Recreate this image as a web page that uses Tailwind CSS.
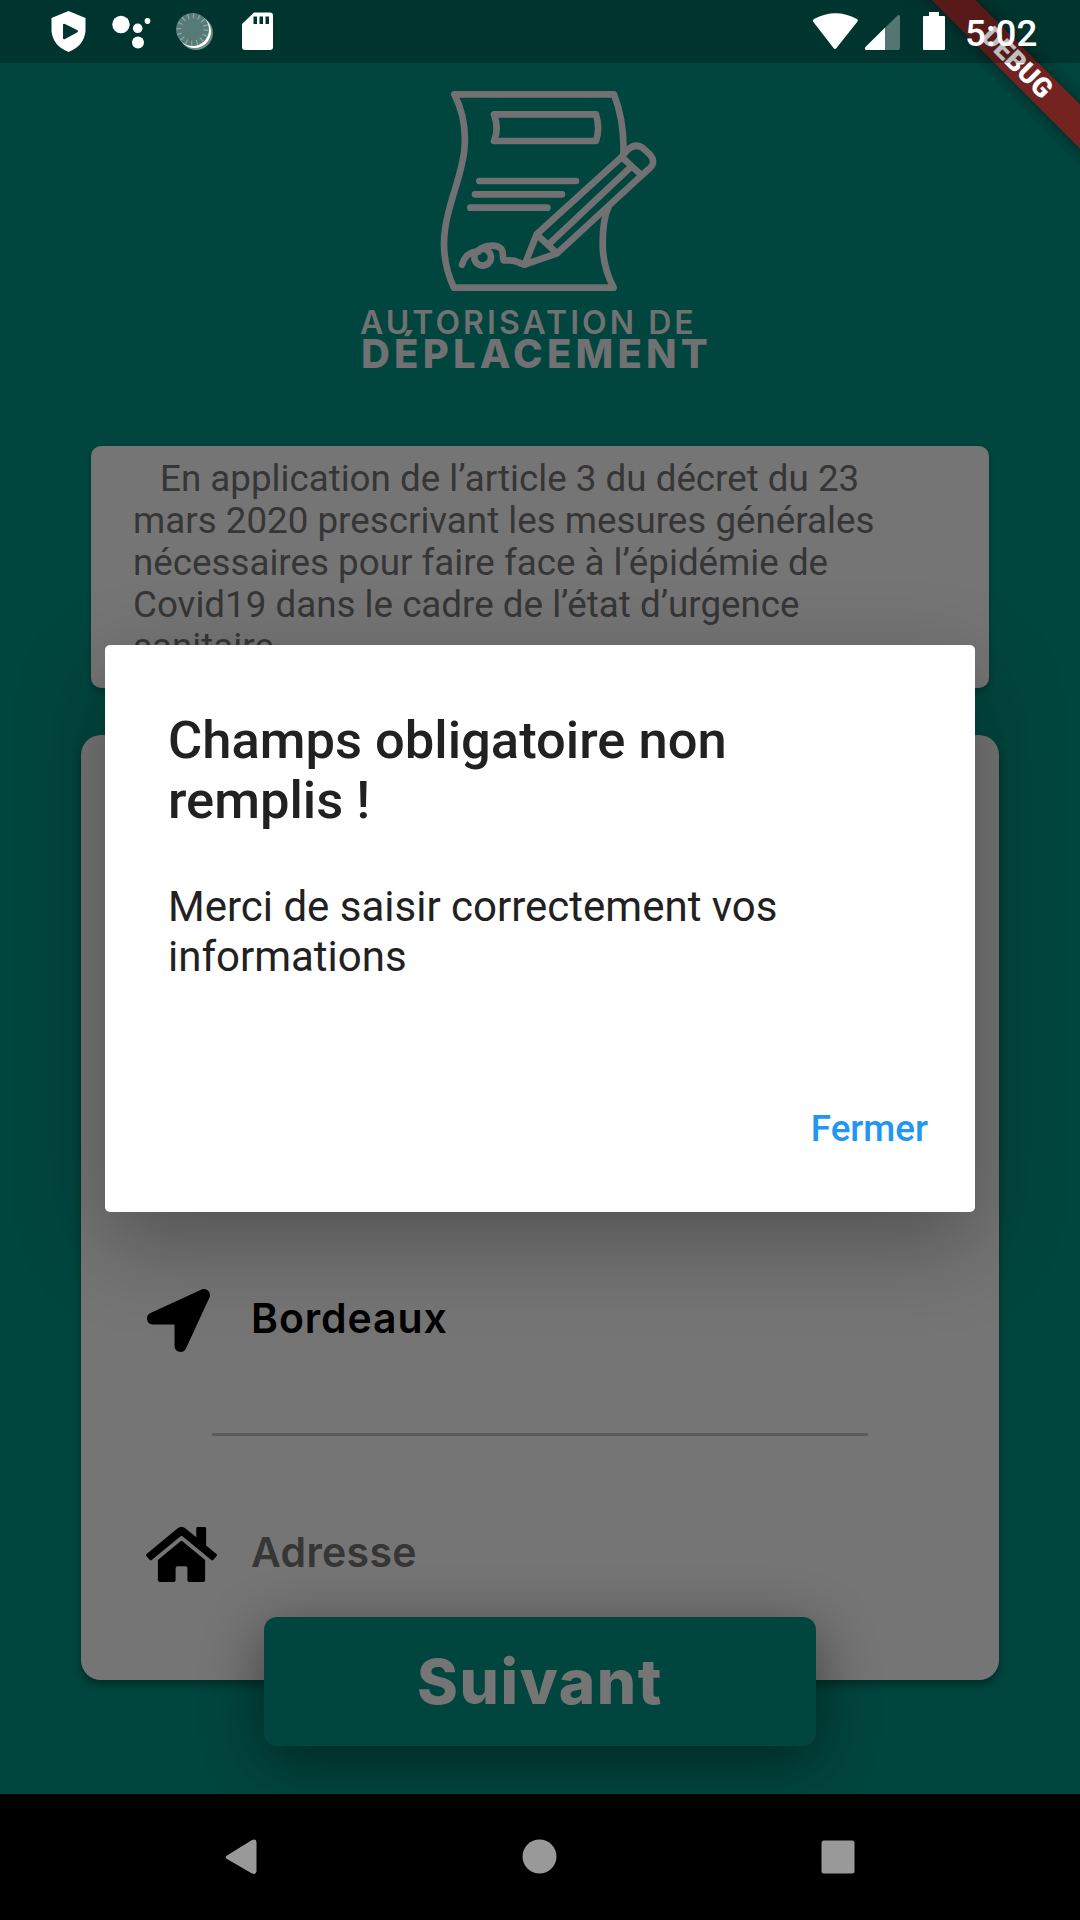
<!DOCTYPE html>
<html lang="fr">
<head>
<meta charset="utf-8">
<title>Autorisation de déplacement</title>
<script src="https://cdn.jsdelivr.net/npm/@tailwindcss/browser@4"></script>
</head>
<body class="bg-black">
<div class="relative flex h-[1920px] w-[1080px] flex-col overflow-hidden bg-[#00463e] font-[Roboto,sans-serif]">

  <!-- App content -->
  <main class="flex h-[1794px] flex-col items-center">
    <header class="flex h-[446px] w-full flex-col items-start pt-[85px] pl-[360px] font-[Inter,sans-serif] text-[#717073]">
      <svg class="ml-[75px] h-[212px] w-[230px] shrink-0" viewBox="285 45 690 636" fill="none" stroke="#717073" stroke-width="20" stroke-linecap="round" stroke-linejoin="round">
        <path d="M850 250C853 180 840 120 822 73H343C372 130 378 190 373 240C364 330 313 420 312 520C312 570 322 612 342 653H821C798 610 788 570 788 520C788 480 792 440 806 410"/>
        <path d="M462 133H768C776 160 776 190 768 213H462C472 190 472 160 462 133Z"/>
        <path d="M418 333H708M405 373H666M391 413H622"/>
        <path d="M366 584C372 560 390 545 415 545M418 540C430 525 470 522 484 537C492 548 486 560 491 571C505 573 518 567 535 577C545 582 550 584 554 584"/>
        <circle cx="428" cy="562" r="25"/>
        <path d="M554 584L590 493L845 261M554 584L651 550L905 316M590 493L651 550M625 524L868 295M845 261L905 316"/>
        <path d="M845 261L862 240Q889 216 913 238L928 252Q950 275 929 295L905 316"/>
      </svg>
      <div class="mt-[2px] text-[32px] leading-[48px] font-semibold tracking-[3.05px] whitespace-nowrap">AUTORISATION DE</div>
      <div class="-mt-[17px] ml-px text-[40px] leading-[48px] font-extrabold tracking-[4.2px] whitespace-nowrap">DÉPLACEMENT</div>
    </header>

    <section class="h-[242px] w-[898px] shrink-0 rounded-[10px] bg-[#757575] px-[42px] pt-[12px] text-[36.75px] leading-[42px] text-[#363636] shadow-[0_4px_6px_rgba(0,0,0,0.25)]">
      <p class="indent-[27px] whitespace-nowrap">En application de l’article 3 du décret du 23<br>mars 2020 prescrivant les mesures générales<br>nécessaires pour faire face à l’épidémie de<br>Covid19 dans le cadre de l’état d’urgence<br>sanitaire</p>
    </section>

    <section class="mt-[47px] flex h-[945px] w-[918px] shrink-0 flex-col rounded-[20px] bg-[#757575] pt-[554px] font-[Inter,sans-serif] text-[41px] font-semibold shadow-[0_5px_8px_rgba(0,0,0,0.35)]">
      <div class="flex h-[63px] items-center pl-[66px] text-black">
        <svg class="h-[63px] w-[63px]" viewBox="0 0 512 512" fill="currentColor"><path d="M444.52 3.52L28.74 195.42c-47.97 22.39-31.98 92.75 19.19 92.75h175.91v175.91c0 51.17 70.36 67.17 92.75 19.19l191.9-415.78c15.99-38.38-25.59-79.97-63.97-63.97z"/></svg>
        <span class="ml-[41px] pb-[5px] leading-[48px] tracking-[0.9px]">Bordeaux</span>
      </div>
      <div class="mt-[81px] ml-[131px] h-[3px] w-[656px] bg-[#5b5b5b]"></div>
      <div class="mt-[87px] flex h-[63px] items-center pl-[65px] text-[#363636]">
        <svg class="h-[63px] w-[71px] text-black" viewBox="0 0 576 512" fill="currentColor"><path d="M280.37 148.26L96 300.11V464a16 16 0 0 0 16 16l112.06-.29a16 16 0 0 0 15.92-16V368a16 16 0 0 1 16-16h64a16 16 0 0 1 16 16v95.64a16 16 0 0 0 16 16.05L464 480a16 16 0 0 0 16-16V300L295.67 148.26a12.19 12.19 0 0 0-15.3 0zM571.6 251.47L488 182.56V44.05a12 12 0 0 0-12-12h-56a12 12 0 0 0-12 12v72.61L318.47 43a48 48 0 0 0-61 0L4.34 251.47a12 12 0 0 0-1.6 16.9l25.5 31A12 12 0 0 0 45.15 301l235.22-193.74a12.19 12.19 0 0 1 15.3 0L530.9 301a12 12 0 0 0 16.9-1.6l25.5-31a12 12 0 0 0-1.7-16.93z"/></svg>
        <span class="ml-[34px] pb-[6px] leading-[48px] tracking-[0.3px]">Adresse</span>
      </div>
    </section>

    <button class="-mt-[63px] flex h-[129px] w-[552px] shrink-0 items-center justify-center rounded-[13px] bg-[#00463e] font-[Inter,sans-serif] text-[62px] font-extrabold tracking-[1.6px] text-[#757575] shadow-[0_15px_60px_rgba(0,0,0,0.47)]">Suivant</button>
  </main>

  <!-- Android navigation bar -->
  <nav class="relative flex h-[126px] items-center bg-black pl-[224px]">
    <svg class="h-[36px] w-[640px]" viewBox="224 1839 640 36" fill="#999"><path d="M227 1855.5L252 1840Q256 1838.500 256.500 1842V1871.500Q256 1875 252 1873.500L227 1859Q224.500 1857 227 1855.500Z"/><circle cx="539.500" cy="1856.500" r="17"/><rect x="821.500" y="1840.500" width="33" height="33" rx="2.500"/></svg>
  </nav>

  <!-- Debug ribbon -->
  <div class="absolute top-[46.5px] left-[866px] flex h-[31px] w-[300px] rotate-45 items-center justify-center bg-[#742321] pl-[2px] text-[27.3px] font-black text-white shadow-[0_0_16px_rgba(0,0,0,0.5)]">DEBUG</div>

  <!-- Status bar -->
  <div class="absolute top-0 left-0 flex h-[63px] w-[1080px] bg-black/25">
    <svg class="h-[63px] w-[950px] shrink-0" viewBox="0 0 950 63" fill="#fff">
      <path fill-rule="evenodd" d="M68.500 11L85.500 18V31Q84 46 68.500 52Q53 46 51.500 31V18ZM63 25V38Q63 40 65 39L77 32.500Q79 31 77 30L65 24Q63 23 63 25Z"/>
      <circle cx="121" cy="24.500" r="8.700"/><circle cx="137.700" cy="28.300" r="4.800"/><circle cx="147.500" cy="21" r="2.900"/><circle cx="138" cy="42.500" r="6"/>
      <circle cx="196" cy="33" r="17" fill="#6f8c88"/>
      <circle cx="194.500" cy="31.500" r="16.500"/>
      <circle cx="192.500" cy="29.500" r="16.500" fill="#567a75"/>
      <circle cx="192.500" cy="29.500" r="13.500" fill="none" stroke="#8ea5a1" stroke-width="5" stroke-dasharray="1.300 4.002"/>
      <path fill-rule="evenodd" d="M254 12.500H270Q273 12.500 273 15.500V47Q273 50 270 50H245Q242 50 242 47V24ZM253.500 16.500V24H257V16.500ZM259.500 16.500V24H263V16.500ZM265.500 16.500V24H269V16.500Z"/>
      <path d="M813 21.500Q812 20 814 19Q835.500 7.500 857 19Q858.500 20 857.500 21.500L836.500 48Q835 50 833.500 48Z"/>
      <path d="M866 50Q864 49 865.500 47L897.500 15.500Q900 14 900 17V48Q900 50 898 50Z" fill-opacity=".33"/>
      <path d="M866 50Q864 49 865.500 47L885 27.800V50Z"/>
      <path d="M929 16V12H939V16H944Q945 16 945 17V49Q945 50 944 50H924Q923 50 923 49V17Q923 16 924 16Z"/>
    </svg>
    <span class="ml-[15px] pt-[12px] text-[36.75px] leading-[44px] font-medium text-white">5:02</span>
  </div>

  <!-- Dialog -->
  <div role="dialog" class="absolute top-[645px] left-[105px] flex h-[567px] w-[870px] flex-col rounded-[5px] bg-white px-[63px] pt-[65px] text-[#212121] shadow-[0_30px_90px_rgba(0,0,0,0.3)]">
    <h1 class="text-[52.5px] leading-[60px] font-medium">Champs obligatoire non<br>remplis !</h1>
    <p class="mt-[52px] text-[42px] leading-[50px]">Merci de saisir correctement vos<br>informations</p>
    <button class="mt-[125px] -mr-[16px] self-end text-[36.75px] leading-[44px] font-medium text-[#2196f3]">Fermer</button>
  </div>
</div>
</body>
</html>
